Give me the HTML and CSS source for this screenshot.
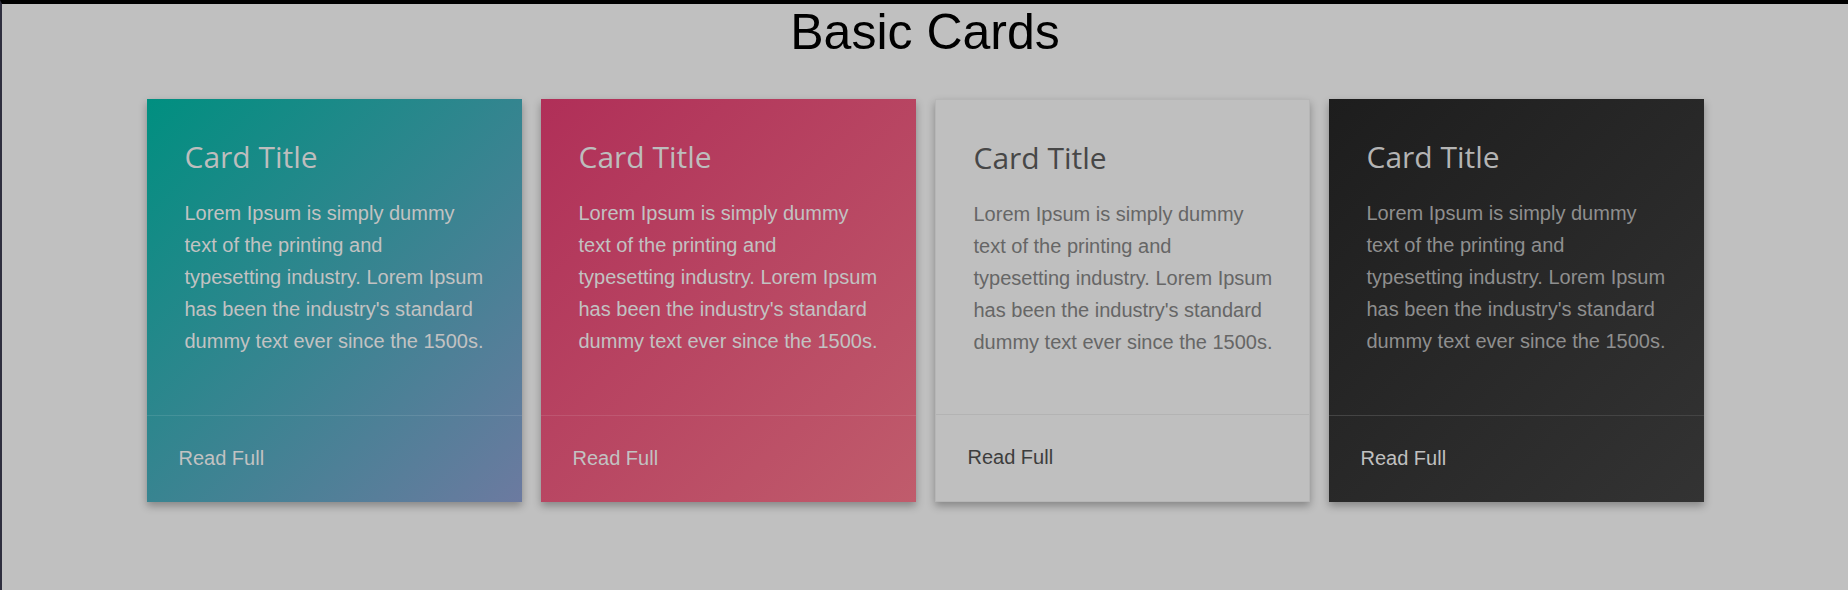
FILE: index.html
```html
<!DOCTYPE html>
<html lang="en">

<head>
    <meta charset="UTF-8">
    <meta name="viewport" content="width=device-width, initial-scale=1.0">
    <title>Basic Cards</title>
    <link rel="stylesheet" href="styles.css">
</head>

<body>
    <h1>Basic Cards</h1>

    <div class="cards">
        <div class="card card-teal">
            <div class="card-body">
                <h2 class="card-title">Card Title</h2>
                <p class="card-text">Lorem Ipsum is simply dummy text of the printing and<br>typesetting industry. Lorem Ipsum has been the industry's standard dummy text ever since the 1500s.</p>
            </div>
            <div class="card-footer">
                <a href="#" class="card-link">Read Full</a>
            </div>
        </div>

        <div class="card card-pink">
            <div class="card-body">
                <h2 class="card-title">Card Title</h2>
                <p class="card-text">Lorem Ipsum is simply dummy text of the printing and<br>typesetting industry. Lorem Ipsum has been the industry's standard dummy text ever since the 1500s.</p>
            </div>
            <div class="card-footer">
                <a href="#" class="card-link">Read Full</a>
            </div>
        </div>

        <div class="card card-light">
            <div class="card-body">
                <h2 class="card-title">Card Title</h2>
                <p class="card-text">Lorem Ipsum is simply dummy text of the printing and<br>typesetting industry. Lorem Ipsum has been the industry's standard dummy text ever since the 1500s.</p>
            </div>
            <div class="card-footer">
                <a href="#" class="card-link">Read Full</a>
            </div>
        </div>

        <div class="card card-dark">
            <div class="card-body">
                <h2 class="card-title">Card Title</h2>
                <p class="card-text">Lorem Ipsum is simply dummy text of the printing and<br>typesetting industry. Lorem Ipsum has been the industry's standard dummy text ever since the 1500s.</p>
            </div>
            <div class="card-footer">
                <a href="#" class="card-link">Read Full</a>
            </div>
        </div>
    </div>
</body>

</html>
```

FILE: styles.css
```css
* {
    box-sizing: border-box;
}

body {
    margin: 0;
    min-height: 100vh;
    background-color: #c0c0c0;
    border-top: 4px solid #000;
    border-left: 2px solid #2e2e3e;
    font-family: 'Liberation Sans', Arial, sans-serif;
}

h1 {
    margin: 0;
    text-align: center;
    font-size: 50px;
    line-height: 56px;
    font-weight: normal;
    color: #000;
}

.cards {
    display: flex;
    justify-content: center;
    gap: 19px;
    margin-top: 39px;
}

.card {
    width: 375px;
    height: 403px;
    display: flex;
    flex-direction: column;
    box-shadow: 0 4px 8px rgba(0, 0, 0, 0.3);
}

.card-body {
    flex: 1;
    padding: 37px 32px 0 38px;
}

.card-title {
    margin: 0 0 20px;
    font-family: 'Open Sans', sans-serif;
    font-size: 30px;
    font-weight: normal;
}

.card-text {
    margin: 0;
    font-size: 20px;
    line-height: 32px;
}

.card-footer {
    flex: none;
    padding: 31px 30px 31px 32px;
    line-height: 23px;
    border-top: 1px solid rgba(255, 255, 255, 0.1);
}

.card-link {
    font-size: 20px;
    text-decoration: none;
}

/* colour variants */
.card-teal {
    background: linear-gradient(135deg, #008f80, #6c7aa0);
}

.card-pink {
    background: linear-gradient(135deg, #b02f58, #c05c6c);
}

.card-teal .card-title,
.card-pink .card-title {
    color: #bdbdbd;
}

.card-teal .card-text,
.card-pink .card-text,
.card-teal .card-link,
.card-pink .card-link {
    color: #c2c2c2;
}

.card-light {
    background-color: #bfbfbf;
    border: 1px solid #b6b6b6;
}

.card-light .card-title {
    color: #474747;
}

.card-light .card-text {
    color: #666;
}

.card-light .card-link {
    color: #3d3d3d;
}

.card-light .card-footer {
    border-top-color: #b3b3b3;
}

.card-dark {
    background: linear-gradient(135deg, #1d1d1d, #333333);
}

.card-dark .card-title {
    color: #b4b4b4;
}

.card-dark .card-text {
    color: #8f8f8f;
}

.card-dark .card-link {
    color: #c0c0c0;
}

.card-dark .card-footer {
    border-top-color: #444;
}
```
